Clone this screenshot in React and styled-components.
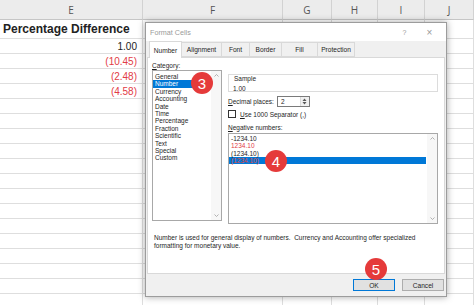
import React from 'react'
import styled, { createGlobalStyle } from 'styled-components'

const GlobalStyle = createGlobalStyle`
  html, body {
    margin: 0;
    padding: 0;
    background: #fff;
    overflow: hidden;
  }
  body {
    font-family: "Liberation Sans", Arial, sans-serif;
  }
`

const Page = styled.div`
  position: relative;
  width: 474px;
  height: 305px;
  overflow: hidden;
`

const Sheet = styled.div`
  display: grid;
  grid-template-columns: 143px 140px 49px 46px 47px 49px;
  grid-template-rows: 20px 19px repeat(19, 15px);
`

const HeadCell = styled.div`
  background: #ececec;
  border-right: 1px solid #d2d2d2;
  border-bottom: 1px solid #c6c6c6;
  display: flex;
  align-items: center;
  justify-content: center;
  font-family: "Open Sans", sans-serif;
  font-size: 10px;
  color: #555;
`

const Cell = styled.div`
  border-right: 1px solid #dedede;
  border-bottom: 1px solid #dedede;
  display: flex;
  align-items: center;
  justify-content: ${p => (p.$right ? 'flex-end' : 'flex-start')};
  padding: 0 5px 0 3px;
  font-size: ${p => (p.$bold ? '12px' : '10px')};
  font-weight: ${p => (p.$bold ? 700 : 400)};
  color: ${p => (p.$neg ? '#e23b45' : '#222')};
  white-space: nowrap;
  overflow: hidden;
`

const Dialog = styled.div`
  position: absolute;
  left: 145px;
  top: 22px;
  width: 300px;
  height: 273px;
  background: #f0f0f0;
  border: 1px solid #9c9c9c;
  box-shadow: 0 0 7px rgba(0, 0, 0, 0.35);
  display: flex;
  flex-direction: column;
  font-family: "Liberation Sans", Arial, sans-serif;
  font-size: 6.5px;
  color: #1e1e1e;
`

const TitleBar = styled.div`
  height: 18px;
  background: #fff;
  display: flex;
  align-items: center;
  padding: 0 4px;
  color: #9a9a9a;
  font-size: 7.2px;
`

const TitleText = styled.span`
  flex: 1;
`

const TitleButton = styled.span`
  width: 25px;
  text-align: center;
  color: #9a9a9a;
  font-size: ${p => (p.$big ? '10px' : '7px')};
`

const Tabs = styled.div`
  display: flex;
  height: 16px;
  padding-left: 3px;
  align-items: flex-end;
`

const Tab = styled.div`
  width: ${p => p.$w}px;
  height: ${p => (p.$active ? '17px' : '15px')};
  margin-bottom: ${p => (p.$active ? '-1px' : '0')};
  box-sizing: border-box;
  background: ${p => (p.$active ? '#fff' : '#f0f0f0')};
  border: 1px solid #d9d9d9;
  border-bottom: ${p => (p.$active ? 'none' : '1px solid #d9d9d9')};
  border-left: ${p => (p.$active ? '1px solid #d9d9d9' : 'none')};
  display: flex;
  align-items: center;
  justify-content: center;
  font-size: 6.6px;
  position: relative;
  z-index: ${p => (p.$active ? 2 : 1)};
`

const Panel = styled.div`
  margin: 0 1px 0 1px;
  height: 217px;
  background: #fff;
  border: 1px solid #d9d9d9;
  padding: 4px 5px 0 4px;
  box-sizing: border-box;
`

const Columns = styled.div`
  display: grid;
  grid-template-columns: 70px 210px;
  column-gap: 6px;
`

const Column = styled.div`
  display: flex;
  flex-direction: column;
  padding-top: ${p => p.$offset || 0}px;
`

const Label = styled.div`
  height: 8px;
  line-height: 8px;
  margin-top: ${p => p.$mt || 0}px;
  white-space: nowrap;
`

const Key = styled.span`
  text-decoration: underline;
`

const ListBox = styled.div`
  position: relative;
  height: ${p => p.$h}px;
  border: 1px solid #a8a8a8;
  box-sizing: border-box;
  margin-top: ${p => p.$mt || 0}px;
  padding: ${p => p.$pt || 1}px 11px 0 0;
`

const Item = styled.div`
  height: ${p => p.$lh}px;
  line-height: ${p => p.$lh}px;
  padding-left: 2px;
  background: ${p => (p.$selected ? '#0078d7' : 'transparent')};
  color: ${p => (p.$selected ? (p.$neg ? '#e2453a' : '#fff') : p.$neg ? '#e23b45' : '#1e1e1e')};
  white-space: nowrap;
`

const ScrollBar = styled.div`
  position: absolute;
  right: 0;
  top: 0;
  bottom: 0;
  width: 10px;
  background: #f7f7f7;
  display: flex;
  flex-direction: column;
  justify-content: space-between;
  align-items: center;
  padding: 3px 0;
  box-sizing: border-box;
`

const SampleBox = styled.div`
  height: 18px;
  border: 1px solid #dcdcdc;
  box-sizing: border-box;
  padding: 0 4px;
`

const Legend = styled.div`
  margin-top: -4px;
  height: 8px;
  line-height: 8px;
  display: inline-block;
  background: #fff;
  padding: 0 1px;
`

const SampleValue = styled.div`
  line-height: 8px;
  margin-top: 2px;
`

const Row = styled.div`
  display: flex;
  align-items: center;
  height: ${p => p.$h}px;
  margin-top: ${p => p.$mt || 0}px;
  gap: ${p => p.$gap || 0}px;
`

const Spinner = styled.div`
  width: 33px;
  height: 11px;
  border: 1px solid #7a7a7a;
  box-sizing: border-box;
  display: flex;
  align-items: center;
  justify-content: space-between;
  padding-left: 3px;
`

const SpinButtons = styled.div`
  width: 8px;
  height: 9px;
  background: #f0f0f0;
  border-left: 1px solid #dadada;
  display: flex;
  flex-direction: column;
  align-items: center;
  justify-content: space-around;
`

const CheckBox = styled.div`
  width: 8px;
  height: 8px;
  border: 1px solid #333;
  box-sizing: border-box;
  background: #fff;
`

const Description = styled.div`
  margin: 10px 0 0 2px;
  line-height: 8px;
`

const Footer = styled.div`
  flex: 1;
  display: flex;
  justify-content: flex-end;
  align-items: center;
  gap: 7px;
  padding: 0 2px 0 0;
`

const Button = styled.div`
  width: 42px;
  height: 12px;
  box-sizing: border-box;
  background: #e1e1e1;
  border: 1px solid ${p => (p.$primary ? '#0078d7' : '#adadad')};
  display: flex;
  align-items: center;
  justify-content: center;
  font-size: 6.6px;
`

const Badge = styled.div`
  position: absolute;
  left: ${p => p.$x - 11}px;
  top: ${p => p.$y - 11}px;
  width: 22px;
  height: 22px;
  border-radius: 50%;
  background: #e53a3a;
  color: #fff;
  display: flex;
  align-items: center;
  justify-content: center;
  font-family: "Liberation Sans", Arial, sans-serif;
  font-size: 15px;
  z-index: 5;
`

const Chevron = ({ up }) => (
  <svg width="5" height="3" viewBox="0 0 5 3">
    <path d={up ? 'M0.5 2.5 L2.5 0.5 L4.5 2.5' : 'M0.5 0.5 L2.5 2.5 L4.5 0.5'} fill="none" stroke="#a0a0a0" strokeWidth="0.8" />
  </svg>
)

const Arrow = ({ up }) => (
  <svg width="5" height="3" viewBox="0 0 5 3">
    <path d={up ? 'M0.5 3 L2.5 0.5 L4.5 3 Z' : 'M0.5 0 L2.5 2.5 L4.5 0 Z'} fill="#555" />
  </svg>
)

const columns = ['E', 'F', 'G', 'H', 'I', 'J']
const values = [
  { text: 'Percentage Difference', bold: true },
  { text: '1.00' },
  { text: '(10.45)', neg: true },
  { text: '(2.48)', neg: true },
  { text: '(4.58)', neg: true },
]
const categories = ['General', 'Number', 'Currency', 'Accounting', 'Date', 'Time', 'Percentage', 'Fraction', 'Scientific', 'Text', 'Special', 'Custom']
const negatives = [
  { text: '-1234.10' },
  { text: '1234.10', neg: true },
  { text: '(1234.10)' },
  { text: '(1234.10)', neg: true, selected: true },
]
const tabs = [
  { label: 'Number', w: 33 },
  { label: 'Alignment', w: 40 },
  { label: 'Font', w: 28 },
  { label: 'Border', w: 32 },
  { label: 'Fill', w: 36 },
  { label: 'Protection', w: 37 },
]

export default function App() {
  const rows = Array.from({ length: 20 }, (_, i) => values[i] || null)
  return (
    <Page>
      <GlobalStyle />
      <Sheet>
        {columns.map(c => (
          <HeadCell key={c}>{c}</HeadCell>
        ))}
        {rows.map((v, r) =>
          columns.map((c, ci) => (
            <Cell
              key={c + r}
              $bold={ci === 0 && v && v.bold}
              $right={ci === 0 && v && !v.bold}
              $neg={ci === 0 && v && v.neg}
            >
              {ci === 0 && v ? v.text : ''}
            </Cell>
          ))
        )}
      </Sheet>

      <Dialog>
        <TitleBar>
          <TitleText>Format Cells</TitleText>
          <TitleButton>?</TitleButton>
          <TitleButton $big>×</TitleButton>
        </TitleBar>
        <Tabs>
          {tabs.map((t, i) => (
            <Tab key={t.label} $w={t.w} $active={i === 0}>{t.label}</Tab>
          ))}
        </Tabs>
        <Panel>
          <Columns>
            <Column>
              <Label><Key>C</Key>ategory:</Label>
              <ListBox $h={151} $pt={2}>
                {categories.map(c => (
                  <Item key={c} $lh={7.4} $selected={c === 'Number'}>{c}</Item>
                ))}
                <ScrollBar>
                  <Chevron up />
                  <Chevron />
                </ScrollBar>
              </ListBox>
            </Column>
            <Column $offset={12}>
              <SampleBox>
                <Legend>Sample</Legend>
                <SampleValue>1.00</SampleValue>
              </SampleBox>
              <Row $h={11} $mt={4} $gap={3}>
                <span><Key>D</Key>ecimal places:</span>
                <Spinner>
                  <span>2</span>
                  <SpinButtons>
                    <Arrow up />
                    <Arrow />
                  </SpinButtons>
                </Spinner>
              </Row>
              <Row $h={8} $mt={3} $gap={4}>
                <CheckBox />
                <span><Key>U</Key>se 1000 Separator (,)</span>
              </Row>
              <Label $mt={6}><Key>N</Key>egative numbers:</Label>
              <ListBox $h={91} $mt={1}>
                {negatives.map((n, i) => (
                  <Item key={i} $lh={7.3} $neg={n.neg} $selected={n.selected}>{n.text}</Item>
                ))}
                <ScrollBar>
                  <Chevron up />
                  <Chevron />
                </ScrollBar>
              </ListBox>
            </Column>
          </Columns>
          <Description>
            Number is used for general display of numbers.&nbsp; Currency and Accounting offer specialized
            <br />
            formatting for monetary value.
          </Description>
        </Panel>
        <Footer>
          <Button $primary>OK</Button>
          <Button>Cancel</Button>
        </Footer>
        <Badge $x={56} $y={60}>3</Badge>
        <Badge $x={130} $y={138}>4</Badge>
        <Badge $x={230} $y={246}>5</Badge>
      </Dialog>
    </Page>
  )
}
